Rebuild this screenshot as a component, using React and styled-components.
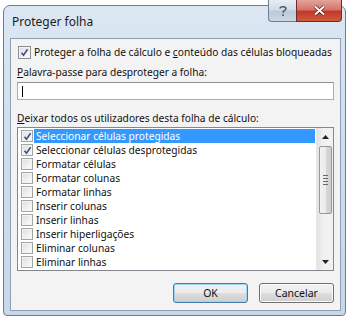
import styled, { createGlobalStyle } from "styled-components";

const GlobalStyle = createGlobalStyle`
  body {
    margin: 0;
    background: #ffffff;
    font-family: "Noto Sans", "Open Sans", sans-serif;
  }
`;

const Window = styled.div`
  margin: 5px 0 0 3px;
  width: 343px;
  height: 311px;
  box-sizing: border-box;
  border: 1px solid #6b7d93;
  border-radius: 7px 7px 4px 4px;
  background: linear-gradient(180deg, #dce7f3 0%, #d0deee 40%, #c8d8ea 100%);
  padding: 0 4px 4px 6px;
  display: flex;
  flex-direction: column;
`;

const TitleBar = styled.div`
  height: 32px;
  display: flex;
  justify-content: space-between;
  align-items: center;
`;

const Title = styled.span`
  padding-left: 2px;
  font-size: 12px;
  color: #1b1b1b;
  margin-top: -1px;
`;

const Caption = styled.div`
  display: flex;
  align-self: flex-start;
  margin-top: -6px;
  margin-right: -1px;
`;

const CapButton = styled.div`
  width: ${(p) => p.$w}px;
  height: 22px;
  box-sizing: border-box;
  border: 1px solid ${(p) => (p.$close ? "#6f2a26" : "#6c7d92")};
  border-top: none;
  border-radius: ${(p) => (p.$close ? "0 0 4px 0" : "0 0 0 4px")};
  ${(p) => !p.$close && "border-right: none;"}
  background: ${(p) =>
    p.$close
      ? "linear-gradient(180deg, #e3a39b 0%, #d5766c 45%, #c2382b 55%, #cf5a3f 100%)"
      : "linear-gradient(180deg, #e6edf5 0%, #d2dce8 45%, #bccadb 55%, #c9d6e4 100%)"};
  display: flex;
  align-items: center;
  justify-content: center;
`;

const Panel = styled.div`
  flex: 1;
  border: 1px solid #8e9fb4;
  background: #f3f3f3;
  padding: 6px 6px 7px 6px;
  display: flex;
  flex-direction: column;
  font-size: 10.2px;
  color: #111;
`;

const CheckRow = styled.label`
  height: 14px;
  display: flex;
  align-items: center;
  gap: 3px;
  padding-left: 1px;
  white-space: nowrap;
`;

const Box = styled.span`
  width: ${(p) => p.$size}px;
  height: ${(p) => p.$size}px;
  flex: none;
  box-sizing: border-box;
  border: 1px solid ${(p) => (p.$size > 12 ? "#8e8f8f" : "#a4a4a4")};
  background: linear-gradient(135deg, #dcdcdc 0%, #f4f4f4 70%, #ffffff 100%);
  box-shadow: inset 0 0 0 1px #f4f4f4;
  display: flex;
  align-items: center;
  justify-content: center;
`;

const FieldLabel = styled.div`
  height: 14px;
  line-height: 14px;
  margin-top: ${(p) => p.$top}px;
  white-space: nowrap;
`;

const Key = styled.span`
  text-decoration: underline;
`;

const Input = styled.div`
  margin-top: 3px;
  height: 18px;
  box-sizing: border-box;
  border: 1px solid #abadb3;
  border-top-color: #8e9196;
  background: #fff;
  display: flex;
  align-items: center;
  padding-left: 4px;
`;

const Caret = styled.span`
  width: 1px;
  height: 11px;
  background: #000;
`;

const List = styled.div`
  margin-top: 2px;
  height: 144px;
  box-sizing: border-box;
  border: 1px solid #828790;
  background: #fff;
  display: flex;
`;

const Items = styled.div`
  flex: 1;
  padding: 1px 1px 0 3px;
  display: flex;
  flex-direction: column;
`;

const Item = styled.div`
  height: 14px;
  display: flex;
  align-items: center;
  white-space: nowrap;
`;

const ItemText = styled.span`
  flex: 1;
  height: 14px;
  line-height: 14px;
  margin-left: 1px;
  padding-left: 2px;
  background: ${(p) => (p.$sel ? "#3399ff" : "transparent")};
  color: ${(p) => (p.$sel ? "#fff" : "#111")};
`;

const ScrollBar = styled.div`
  width: 16px;
  background: linear-gradient(90deg, #e2e2e2 0%, #f1f1f1 40%, #f1f1f1 100%);
  border-left: 1px solid #e8e8e8;
  display: flex;
  flex-direction: column;
  align-items: center;
`;

const Arrow = styled.div`
  height: 17px;
  width: 100%;
  display: flex;
  align-items: center;
  justify-content: center;
`;

const Thumb = styled.div`
  width: 13px;
  height: 68px;
  margin-top: 1px;
  box-sizing: border-box;
  border: 1px solid #979797;
  border-radius: 2px;
  background: linear-gradient(90deg, #f2f2f2 0%, #ebebeb 50%, #d7d7d7 55%, #cfcfcf 100%);
  display: flex;
  flex-direction: column;
  align-items: center;
  justify-content: center;
  gap: 2px;
`;

const Grip = styled.span`
  width: 5px;
  height: 1px;
  background: #6b6b6b;
`;

const Track = styled.div`
  flex: 1;
`;

const Buttons = styled.div`
  margin-top: 12px;
  display: flex;
  justify-content: flex-end;
  gap: 11px;
`;

const Button = styled.div`
  width: 75px;
  height: 20px;
  box-sizing: border-box;
  border: 1px solid ${(p) => (p.$default ? "#3c7fb1" : "#707070")};
  border-radius: 3px;
  background: linear-gradient(180deg, #f2f2f2 0%, #ebebeb 48%, #dddddd 52%, #cfcfcf 100%);
  box-shadow: inset 0 0 0 1px ${(p) => (p.$default ? "#9fd3f0" : "#fbfbfb")};
  display: flex;
  align-items: center;
  justify-content: center;
  font-size: 10.5px;
  color: #111;
`;

function Check({ on, size }) {
  return (
    <Box $size={size}>
      {on && (
        <svg width="9" height="9" viewBox="0 0 9 9">
          <path d="M1.5 4.8 L3.5 7.2 L7.6 1.2" fill="none" stroke="#3a4f8e" strokeWidth="1.6" />
        </svg>
      )}
    </Box>
  );
}

const items = [
  ["Seleccionar células protegidas", true, true],
  ["Seleccionar células desprotegidas", true, false],
  ["Formatar células"],
  ["Formatar colunas"],
  ["Formatar linhas"],
  ["Inserir colunas"],
  ["Inserir linhas"],
  ["Inserir hiperligações"],
  ["Eliminar colunas"],
  ["Eliminar linhas"],
];

export default function App() {
  return (
    <>
      <GlobalStyle />
      <Window>
        <TitleBar>
          <Title>Proteger folha</Title>
          <Caption>
            <CapButton $w={28}>
              <svg width="10" height="12" viewBox="0 0 10 12">
                <path d="M2 3.5 C2 1 8 1 8 3.5 C8 5.5 5 5.5 5 7.8" fill="none" stroke="#4a5566" strokeWidth="1.5" />
                <rect x="4.2" y="9.3" width="1.7" height="1.7" fill="#4a5566" />
              </svg>
            </CapButton>
            <CapButton $w={46} $close>
              <svg width="13" height="11" viewBox="0 0 13 11">
                <path d="M2 1.5 L11 9.5 M11 1.5 L2 9.5" stroke="#5a1a14" strokeWidth="3.4" />
                <path d="M2 1.5 L11 9.5 M11 1.5 L2 9.5" stroke="#ffffff" strokeWidth="2" />
              </svg>
            </CapButton>
          </Caption>
        </TitleBar>
        <Panel>
          <CheckRow>
            <Check on size={13} />
            <span>
              Proteger a folha de cálculo e <Key>c</Key>onteúdo das células bloqueadas
            </span>
          </CheckRow>
          <FieldLabel $top={6}>
            <Key>P</Key>alavra-passe para desproteger a folha:
          </FieldLabel>
          <Input>
            <Caret />
          </Input>
          <FieldLabel $top={11}>
            <Key>D</Key>eixar todos os utilizadores desta folha de cálculo:
          </FieldLabel>
          <List>
            <Items>
              {items.map(([label, on, sel]) => (
                <Item key={label}>
                  <Check on={on} size={12} />
                  <ItemText $sel={sel}>{label}</ItemText>
                </Item>
              ))}
            </Items>
            <ScrollBar>
              <Arrow>
                <svg width="7" height="4" viewBox="0 0 7 4">
                  <path d="M0 4 L3.5 0 L7 4 Z" fill="#222" />
                </svg>
              </Arrow>
              <Thumb>
                <Grip />
                <Grip />
                <Grip />
                <Grip />
              </Thumb>
              <Track />
              <Arrow>
                <svg width="7" height="4" viewBox="0 0 7 4">
                  <path d="M0 0 L7 0 L3.5 4 Z" fill="#222" />
                </svg>
              </Arrow>
            </ScrollBar>
          </List>
          <Buttons>
            <Button $default>OK</Button>
            <Button>Cancelar</Button>
          </Buttons>
        </Panel>
      </Window>
    </>
  );
}
